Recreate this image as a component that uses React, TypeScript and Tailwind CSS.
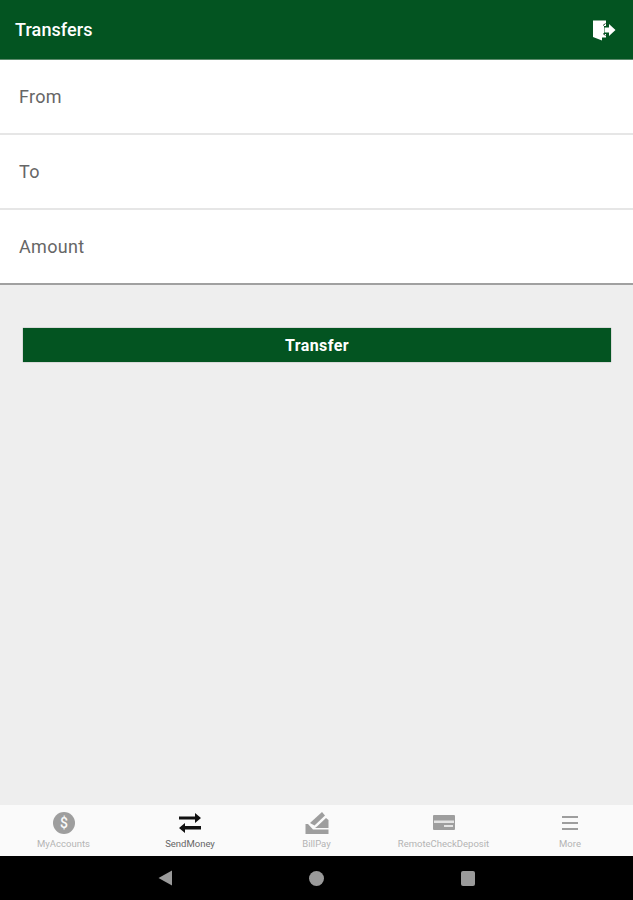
import React from "react";

const font = { fontFamily: "Roboto, 'Liberation Sans', sans-serif" };

function Row({ label, last }: { label: string; last?: boolean }) {
  return (
    <div className={"h-[75px] flex items-center pl-[19px] bg-white border-b-2 " + (last ? "border-[#a0a0a0]" : "border-[#e6e6e6]")}>
      <span className="text-[18px] leading-none text-[#666666] tracking-[0.3px]">{label}</span>
    </div>
  );
}

function Tab({ label, icon, active, className }: { label: string; icon: React.ReactNode; active?: boolean; className: string }) {
  return (
    <div className={"flex flex-col items-center justify-start pt-[6px] " + className}>
      <div className="w-6 h-6 flex items-center justify-center">{icon}</div>
      <span className={"text-[9.5px] leading-none mt-[4px] whitespace-nowrap " + (active ? "text-[#666666]" : "text-[#b4b4b4]")}>{label}</span>
    </div>
  );
}

export default function App() {
  return (
    <div style={font} className="w-[633px] h-[900px] flex flex-col bg-[#eeeeee] overflow-hidden">
      <header className="h-[60px] bg-[#035421] border-b border-[#5d8a6c] flex items-center justify-between pl-[15px] pr-[17px] shrink-0">
        <span className="text-white text-[18px] font-medium leading-none tracking-[0.1px]">Transfers</span>
        <svg width="24" height="24" viewBox="0 0 24 24">
          <path d="M1 2.5 L14 2.5 L14 8 L12 8 L12 16 L14 16 L14 19.5 L10 19.5 L10 22.5 L1 19 Z" fill="#ffffff" />
          <path d="M12.5 9.5 L17 9.5 L17 6 L23.5 12 L17 18 L17 14.5 L12.5 14.5 Z" fill="#ffffff" />
          <path d="M11 7.5 L13.5 5.5 M11 15.5 L13.5 17.5" stroke="#1c3a28" strokeWidth="1" />
        </svg>
      </header>

      <Row label="From" />
      <Row label="To" />
      <Row label="Amount" last />

      <main className="flex-1 px-[23px] pt-[43px]">
        <button className="w-[588px] h-[34px] pt-px bg-[#035421] text-white text-[16px] font-bold tracking-[0.4px] flex items-center justify-center shadow-[0_0_1px_rgba(0,0,0,0.5)]">
          Transfer
        </button>
      </main>

      <nav className="h-[51px] bg-[#fafafa] shrink-0 flex">
        <Tab
          className="w-[127px]"
          label="MyAccounts"
          icon={
            <svg width="24" height="24" viewBox="0 0 24 24">
              <circle cx="12" cy="12" r="11" fill="#9e9e9e" />
              <text x="12" y="17" textAnchor="middle" fontSize="14" fontWeight="500" fill="#fafafa" fontFamily="Roboto">$</text>
            </svg>
          }
        />
        <Tab
          className="w-[126px]"
          active
          label="SendMoney"
          icon={
            <svg width="24" height="24" viewBox="0 0 24 24" fill="#111111">
              <path d="M1 5.5 H17 V2 L23 7 L17 12 V8.5 H1 Z" />
              <path d="M23 15 H7 V12 L1 17 L7 22 V18.5 H23 Z" />
            </svg>
          }
        />
        <Tab
          className="w-[127px]"
          label="BillPay"
          icon={
            <svg width="24" height="24" viewBox="0 0 24 24" fill="#9e9e9e">
              <path d="M0.5 13 L3 13 L8 18.5 L23.5 18.5 V23 H0.5 Z" />
              <path d="M5 12 L17 1 L20 4.5 L9.5 14.5 Z" />
              <path d="M12 15.5 L21 7 L23.5 9 V17 H10 Z" />
            </svg>
          }
        />
        <Tab
          className="w-[127px]"
          label="RemoteCheckDeposit"
          icon={
            <svg width="24" height="24" viewBox="0 0 24 24">
              <rect x="1" y="4" width="22" height="15" rx="1" fill="#9e9e9e" />
              <rect x="2" y="9.5" width="20" height="2.5" fill="#e4e4e4" />
              <rect x="12" y="14" width="9" height="2" fill="#e4e4e4" />
            </svg>
          }
        />
        <Tab
          className="w-[126px]"
          label="More"
          icon={
            <svg width="24" height="24" viewBox="0 0 24 24" fill="#9e9e9e">
              <rect x="4" y="5" width="16" height="2" />
              <rect x="4" y="11" width="16" height="2" />
              <rect x="4" y="17" width="16" height="2" />
            </svg>
          }
        />
      </nav>

      <div className="h-[44px] bg-black shrink-0 flex items-center justify-center gap-[137px]">
        <svg width="14" height="16" viewBox="0 0 14 16"><path d="M0.5 8 L14 0.5 V15.5 Z" fill="#9a9a9a" /></svg>
        <div className="w-[15px] h-[15px] rounded-full bg-[#9a9a9a]" />
        <div className="w-[14px] h-[15px] rounded-[2px] bg-[#9a9a9a]" />
      </div>
    </div>
  );
}
